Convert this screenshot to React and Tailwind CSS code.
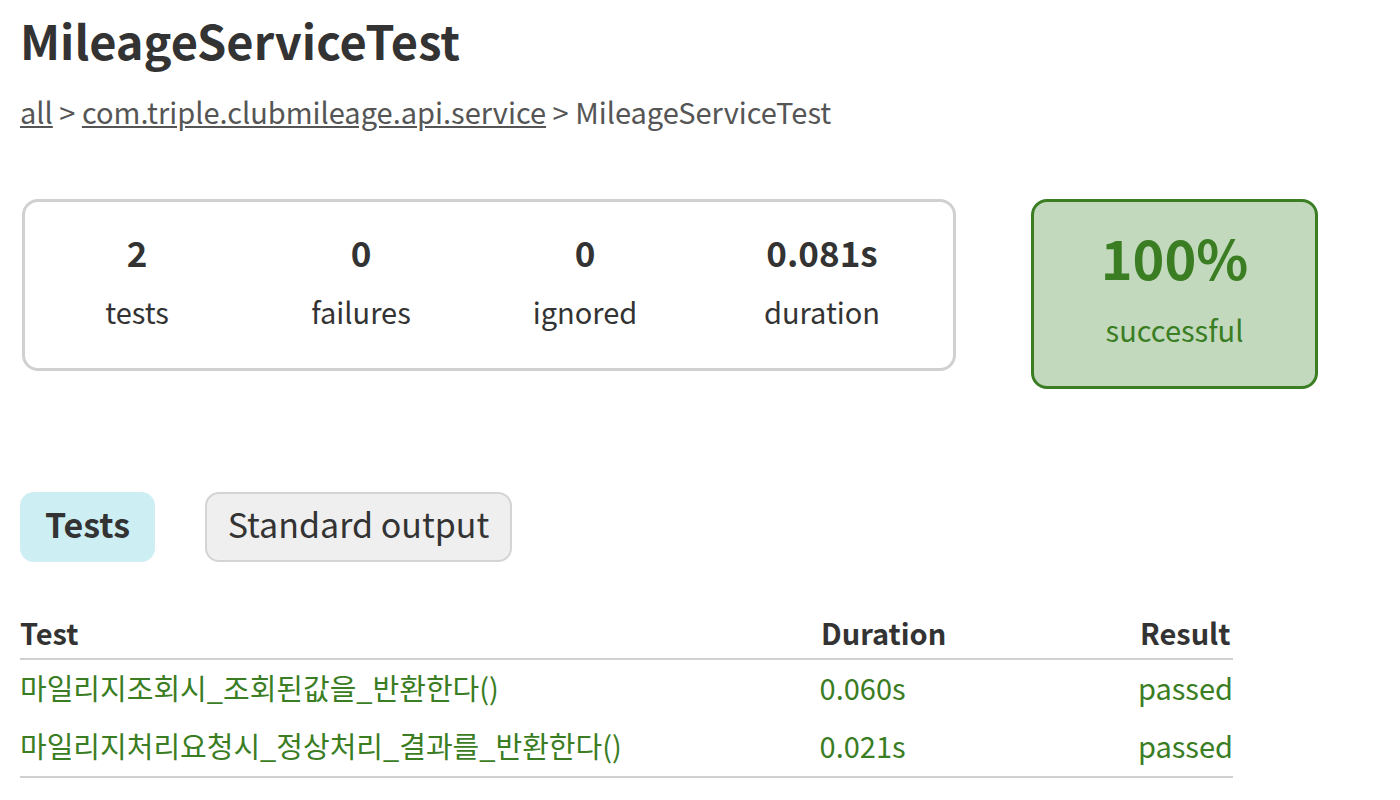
import React from "react";

const FONT = { fontFamily: '"Noto Sans CJK KR", "Noto Sans", sans-serif' };

function Stat({ value, label, w }) {
  return (
    <div className={`${w} flex flex-col items-center`}>
      <div className="text-[35px] leading-[40px] font-bold">{value}</div>
      <div className="mt-[19px] text-[29px] leading-[40px]">{label}</div>
    </div>
  );
}

export default function App() {
  const rows = [
    ["마일리지조회시_조회된값을_반환한다()", "0.060s"],
    ["마일리지처리요청시_정상처리_결과를_반환한다()", "0.021s"],
  ];
  return (
    <div style={FONT} className="min-h-[800px] bg-white text-[#333333] px-[20px] pt-[10px]">
      <h1 className="text-[47px] leading-[60px] font-bold">MileageServiceTest</h1>
      <div className="mt-[21px] text-[29px] leading-[40px] text-[#555555]">
        <a className="underline">all</a> &gt; <a className="underline">com.triple.clubmileage.api.service</a> &gt; MileageServiceTest
      </div>

      <div className="mt-[68px] flex items-start">
        <div className="ml-[2px] w-[934px] h-[172px] border-[3px] border-[#d0d0d0] rounded-[16px] flex pt-[30px]">
          <Stat value="2" label="tests" w="w-[224px]" />
          <Stat value="0" label="failures" w="w-[224px]" />
          <Stat value="0" label="ignored" w="w-[224px]" />
          <Stat value="0.081s" label="duration" w="w-[250px]" />
        </div>
        <div className="ml-[75px] w-[287px] h-[190px] border-[3px] border-[#3a7d23] bg-[#c2d9bd] rounded-[16px] flex flex-col items-center pt-[25px] text-[#3a7d23]">
          <div className="text-[54px] leading-[60px] font-bold">100%</div>
          <div className="mt-[22px] text-[29px] leading-[40px]">successful</div>
        </div>
      </div>

      <div className="mt-[103px] flex gap-[50px]">
        <div className="h-[70px] w-[135px] pb-[6px] flex items-center justify-center rounded-[14px] bg-[#cdeef3] text-[34px] leading-[40px] font-bold">Tests</div>
        <div className="h-[70px] w-[307px] pb-[6px] flex items-center justify-center rounded-[14px] bg-[#efefef] border-2 border-[#d4d4d4] text-[34px] leading-[40px]">Standard output</div>
      </div>

      <div className="mt-[52px] w-[1213px]">
        <div className="flex h-[46px] items-end pb-[6px] border-b-2 border-[#d0d0d0] text-[29px] leading-[40px] font-bold">
          <div className="w-[801px]">Test</div>
          <div className="w-[319px]">Duration</div>
          <div>Result</div>
        </div>
        <div className="border-b-2 border-[#d0d0d0] text-[#3a7d23] text-[29px] leading-[40px]">
          {rows.map(([n, d]) => (
            <div key={n} className="flex h-[58px] items-center pb-[4px]">
              <div className="w-[801px]">{n}</div>
              <div className="w-[319px]">{d}</div>
              <div>passed</div>
            </div>
          ))}
        </div>
      </div>
    </div>
  );
}
